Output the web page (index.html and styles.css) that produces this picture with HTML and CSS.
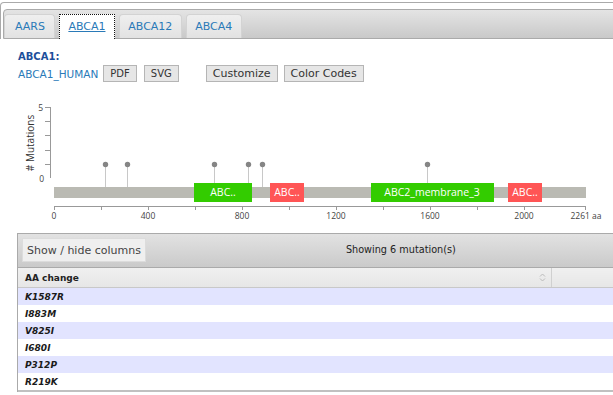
FILE: index.html
```html
<!DOCTYPE html>
<html lang="en">
<head>
    <meta charset="UTF-8">
    <meta name="viewport" content="width=device-width, initial-scale=1.0">
    <title>Mutation Details</title>
    <link rel="stylesheet" href="styles.css">
</head>
<body>
    <div class="page">
        <div class="tabs-head">
            <ul class="tab-nav">
                <li class="tab"><a href="#">AARS</a></li>
                <li class="tab active"><a href="#">ABCA1</a></li>
                <li class="tab"><a href="#">ABCA12</a></li>
                <li class="tab"><a href="#">ABCA4</a></li>
            </ul>
        </div>

        <div class="panel">
            <div class="gene-title">ABCA1:</div>
            <div class="gene-tools">
                <a class="uniprot" href="#">ABCA1_HUMAN</a>
                <button class="tool-btn">PDF</button>
                <button class="tool-btn last-export">SVG</button>
                <button class="opt-btn">Customize</button>
                <button class="opt-btn">Color Codes</button>
            </div>

            <svg class="lollipop" width="600" height="135" viewBox="17 90 600 135">
                <g class="axis">
                    <line x1="50.5" y1="107" x2="50.5" y2="178"/>
                    <line x1="45" y1="107.5" x2="50" y2="107.5"/>
                    <line x1="45" y1="121.5" x2="50" y2="121.5"/>
                    <line x1="45" y1="135.5" x2="50" y2="135.5"/>
                    <line x1="45" y1="150.5" x2="50" y2="150.5"/>
                    <line x1="45" y1="164.5" x2="50" y2="164.5"/>
                </g>
                <text class="tick-label" x="43" y="111" text-anchor="end">5</text>
                <text class="tick-label" x="44" y="182" text-anchor="end">0</text>
                <text class="axis-title" transform="translate(34,143) rotate(-90)" text-anchor="middle"># Mutations</text>

                <g class="stems">
                    <line x1="105.5" y1="165" x2="105.5" y2="187"/>
                    <line x1="127.5" y1="165" x2="127.5" y2="187"/>
                    <line x1="214.5" y1="165" x2="214.5" y2="187"/>
                    <line x1="248.5" y1="165" x2="248.5" y2="187"/>
                    <line x1="262.5" y1="165" x2="262.5" y2="187"/>
                    <line x1="427.5" y1="165" x2="427.5" y2="187"/>
                </g>
                <g class="heads">
                    <circle cx="105.5" cy="164.5" r="2.7"/>
                    <circle cx="127.5" cy="164.5" r="2.7"/>
                    <circle cx="214.5" cy="164.5" r="2.7"/>
                    <circle cx="248.5" cy="164.5" r="2.7"/>
                    <circle cx="262.5" cy="164.5" r="2.7"/>
                    <circle cx="427.5" cy="164.5" r="2.7"/>
                </g>

                <rect class="protein" x="54" y="187" width="532" height="11"/>

                <rect class="domain green" x="194" y="183" width="58" height="19"/>
                <text class="domain-label" x="223" y="196" text-anchor="middle">ABC..</text>
                <rect class="domain red" x="270" y="183" width="34" height="19"/>
                <text class="domain-label" x="287" y="196" text-anchor="middle">ABC..</text>
                <rect class="domain green" x="371" y="183" width="123" height="19"/>
                <text class="domain-label" x="432" y="196" text-anchor="middle">ABC2_membrane_3</text>
                <rect class="domain red" x="508" y="183" width="34" height="19"/>
                <text class="domain-label" x="525" y="196" text-anchor="middle">ABC..</text>

                <g class="axis">
                    <line x1="54" y1="206.5" x2="586" y2="206.5"/>
                    <line x1="54.5" y1="206" x2="54.5" y2="210"/>
                    <line x1="101.5" y1="206" x2="101.5" y2="210"/>
                    <line x1="148.5" y1="206" x2="148.5" y2="210"/>
                    <line x1="195.5" y1="206" x2="195.5" y2="210"/>
                    <line x1="242.5" y1="206" x2="242.5" y2="210"/>
                    <line x1="289.5" y1="206" x2="289.5" y2="210"/>
                    <line x1="336.5" y1="206" x2="336.5" y2="210"/>
                    <line x1="383.5" y1="206" x2="383.5" y2="210"/>
                    <line x1="430.5" y1="206" x2="430.5" y2="210"/>
                    <line x1="477.5" y1="206" x2="477.5" y2="210"/>
                    <line x1="524.5" y1="206" x2="524.5" y2="210"/>
                    <line x1="585.5" y1="206" x2="585.5" y2="210"/>
                </g>
                <text class="tick-label" x="54" y="219" text-anchor="middle">0</text>
                <text class="tick-label" x="148" y="219" text-anchor="middle">400</text>
                <text class="tick-label" x="242" y="219" text-anchor="middle">800</text>
                <text class="tick-label" x="336" y="219" text-anchor="middle">1200</text>
                <text class="tick-label" x="430" y="219" text-anchor="middle">1600</text>
                <text class="tick-label" x="524" y="219" text-anchor="middle">2000</text>
                <text class="tick-label" x="586" y="219" text-anchor="middle">2261 aa</text>
            </svg>

            <div class="mut-table">
                <div class="table-toolbar">
                    <button class="colvis-btn">Show / hide columns</button>
                    <span class="table-info">Showing 6 mutation(s)</span>
                </div>
                <table>
                    <thead>
                        <tr>
                            <th class="col-aa">AA change
                                <svg class="sort-icon" width="7" height="9" viewBox="0 0 7 9">
                                    <path d="M1 3.5 L3.5 1 L6 3.5 M1 5.5 L3.5 8 L6 5.5"/>
                                </svg>
                            </th>
                            <th></th>
                        </tr>
                    </thead>
                    <tbody>
                        <tr class="odd"><td>K1587R</td><td></td></tr>
                        <tr><td>I883M</td><td></td></tr>
                        <tr class="odd"><td>V825I</td><td></td></tr>
                        <tr><td>I680I</td><td></td></tr>
                        <tr class="odd"><td>P312P</td><td></td></tr>
                        <tr><td>R219K</td><td></td></tr>
                    </tbody>
                </table>
            </div>
        </div>
    </div>
</body>
</html>
```

FILE: styles.css
```css
html, body {
    margin: 0;
    overflow: hidden;
}
body {
    font-family: "DejaVu Sans", Verdana, sans-serif;
    font-size: 11px;
    color: #222;
    background-color: white;
}
.page {
    width: 720px;
}
.tabs-head {
    margin-top: 2px;
    border: 1px solid #aaa;
    border-bottom: none;
    border-radius: 4px 4px 0 0;
    padding: 6px 0 0 2px;
}
.tab-nav {
    list-style: none;
    margin: 0;
    padding: 3px 0 0 0;
    height: 25px;
    display: flex;
    gap: 4px;
    align-items: flex-end;
    border: 1px solid #aaa;
    border-radius: 4px 0 0 0;
    background: linear-gradient(#e4e4e4, #c9c9c9);
}
.tab {
    height: 23px;
    border: 1px solid #d3d3d3;
    border-bottom: none;
    border-radius: 4px 4px 0 0;
    background: linear-gradient(#efefef, #e2e2e2);
}
.tab a {
    display: block;
    padding: 0 8.4px;
    line-height: 23px;
    color: #2a7ab8;
    text-decoration: none;
}
.tab:first-child a {
    padding: 0 9px 0 10px;
}
.tab.active {
    height: 24px;
    margin-bottom: -1px;
    border: 1px dotted #111;
    border-bottom: none;
    border-radius: 0;
    background: white;
}
.tab.active a {
    text-decoration: underline;
}
.panel {
    padding: 12px 0 0 17px;
}
.gene-title {
    font-size: 10px;
    font-weight: bold;
    color: #1d4f9b;
    line-height: 12px;
    margin-left: 1px;
}
.gene-tools {
    display: flex;
    align-items: center;
    margin-top: 2px;
    margin-left: 1px;
}
.uniprot {
    font-size: 10.5px;
    color: #2a7ab8;
    text-decoration: none;
    margin-right: 5px;
}
.tool-btn, .opt-btn {
    font-family: inherit;
    color: #333;
    height: 17px;
    background-color: #e6e6e6;
    border: 1px solid #b5b5b5;
    border-radius: 0;
}
.tool-btn {
    font-size: 10px;
    padding: 0 6px;
    margin-right: 7px;
}
.tool-btn.last-export {
    margin-right: 27px;
}
.opt-btn {
    font-size: 11px;
    padding: 0 6px;
    margin-right: 6px;
}
.lollipop {
    display: block;
    margin-top: 8px;
    font-family: "Open Sans", sans-serif;
}
.axis line {
    stroke: #999;
    stroke-width: 1;
}
.tick-label {
    font-size: 8.5px;
    fill: #444;
}
.axis-title {
    font-size: 10px;
    fill: #333;
}
.stems line {
    stroke: #c8c8c8;
    stroke-width: 1;
}
.heads circle {
    fill: #858585;
}
.protein {
    fill: #babab3;
}
.domain.green {
    fill: #33cc00;
}
.domain.red {
    fill: #ff5555;
}
.domain-label {
    font-size: 10.5px;
    fill: white;
}
.mut-table {
    margin-top: 8px;
    border-left: 1px solid #aaa;
    border-top: 1px solid #aaa;
}
.table-toolbar {
    height: 34px;
    padding: 4px 0 0 4px;
    box-sizing: border-box;
    display: flex;
    align-items: flex-start;
    background: linear-gradient(#e2e2e2, #cacaca);
    border-bottom: 1px solid #aaa;
}
.colvis-btn {
    font-family: inherit;
    font-size: 11px;
    color: #444;
    height: 24px;
    padding: 0 4px;
    background-color: #efefef;
    border: 1px solid #dcdcdc;
    border-radius: 0;
}
.table-info {
    margin-left: 200px;
    font-size: 9.7px;
    line-height: 24px;
    color: #222;
}
table {
    border-collapse: collapse;
    width: 700px;
    font-size: 9px;
}
th {
    height: 19px;
    padding: 0 0 0 7px;
    text-align: left;
    font-weight: bold;
    color: #222;
    background: linear-gradient(#f0f0f0, #e6e6e6);
    border-bottom: 1px solid #c8c8c8;
}
th.col-aa {
    width: 526px;
    position: relative;
    border-right: 1px solid #d0d0d0;
}
.sort-icon {
    position: absolute;
    right: 5px;
    top: 5px;
}
.sort-icon path {
    fill: none;
    stroke: #bbb;
    stroke-width: 1;
}
td {
    height: 17px;
    padding: 0 0 0 7px;
    font-weight: bold;
    font-style: italic;
    color: #1a1a1a;
}
tbody tr.odd {
    background-color: #e2e4ff;
}
tbody {
    border-bottom: 2px solid #c0c0c0;
}
```
